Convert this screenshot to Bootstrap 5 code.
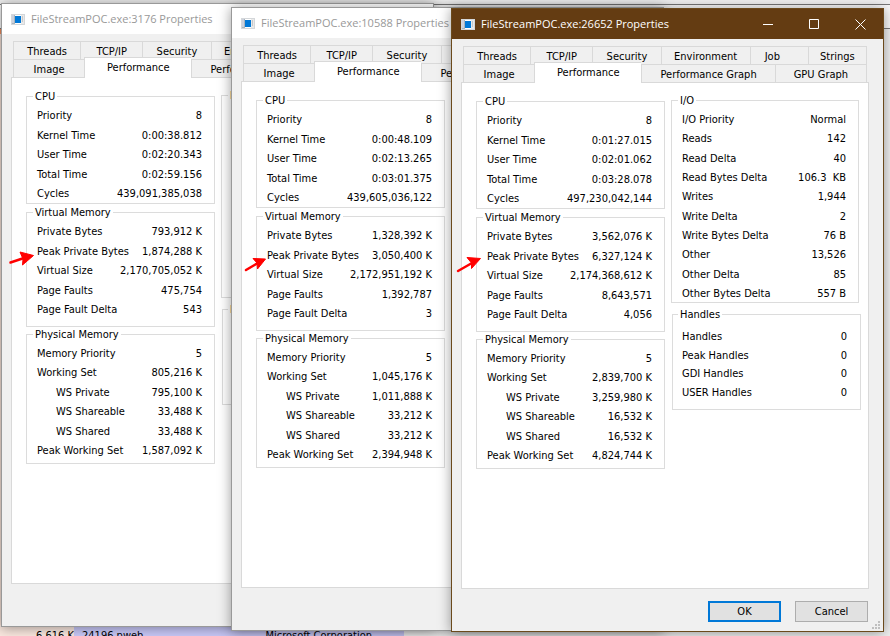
<!DOCTYPE html>
<html lang="en">
<head>
<meta charset="utf-8">
<meta name="viewport" content="width=device-width, initial-scale=1">
<title>FileStreamPOC.exe Properties</title>
<link href="https://cdn.jsdelivr.net/npm/bootstrap@5.3.0/dist/css/bootstrap.min.css" rel="stylesheet">
<style>
body { font-family: "DejaVu Sans Condensed", "Noto Sans", sans-serif; font-size: 11px; line-height: 14px; color: #000; background: #f0f0f0; }
.desk { height: 100vh; min-height: 636px; }
.menu-strip { height: 5px; border-bottom: 1px solid #777; }
.tool-strip { height: 24px; background: #fafafa; border-bottom: 1px solid #777; }
.accent-strip { height: 5px; }
.accent-strip i { width: 2px; background: #f08c5c; height: 22px; display: block; }
.rows-strip { background: linear-gradient(90deg, #f5e0d6 0 450px, #f0f0f0 450px); }
.list-strip { height: 11px; }
.list-strip .cell-a { width: 74px; background: #fae8df; }
.list-strip .cell-b { width: 330px; background: #c8c8f8; }
.list-strip span { padding-top: 4px; white-space: nowrap; }

/* Property windows on the desktop */
.win { position: absolute; width: 433px; height: 624px; background: #f0f0f0; border: 1px solid #999; box-shadow: 0 1px 12px rgba(0,0,0,.4); }
.win-a { left: 1px; top: 3px; }
.win-b { left: 231px; top: 7px; }
.win-c { left: 451px; top: 8px; border-color: #6b4a1c; }
.titlebar { height: 30px; background: #fff; color: #999; font-family: "Open Sans", "Noto Sans", sans-serif; padding-left: 9px; white-space: nowrap; }
.win-c .titlebar { background: #643c12; color: #fff; }
.titlebar h1 { font-size: 11px; line-height: 16px; margin: 0 0 0 6px; font-weight: 400; }
.cap-btn { width: 46px; height: 30px; border: 0; background: none; color: inherit; padding: 0; display: flex; align-items: center; justify-content: center; }

.tabset { padding: 7px 14px 0 9px; }
.tab-line { padding: 0 2px; height: 18px; }
.tab-btn { border: 1px solid #d9d9d9; border-width: 1px 0 0 1px; background: #f0f0f0; padding: 2px 0 0; color: #000; line-height: 14px; white-space: nowrap; min-width: 0; }
.tab-btn:last-child { border-right-width: 1px; }
.tab-btn.active { background: #fff; margin: -2px 0 -1px; z-index: 1; padding-bottom: 2px; }
.w58 { flex: 58 1 58px; padding-right: 14px; }
.w59 { flex: 59 1 59px; }
.w62 { flex: 62 1 62px; }
.w67 { flex: 67 1 67px; }
.w68 { flex: 68 1 68px; }
.w71 { flex: 71 1 71px; }
.w89 { flex: 89 1 89px; }
.w92 { flex: 92 1 92px; }
.w107 { flex: 107 1 107px; }
.w133 { flex: 133 1 133px; }

.sheet { background: #fff; border: 1px solid #d9d9d9; margin: 0 14px 0 9px; padding: 10px 8px 0 14px; gap: 6px; }
.half { flex: 1 1 0; min-width: 0; }
.half + .half { margin-top: -1px; }
.grp { border: 1px solid #dcdcdc; padding: 5px 12px 2px 10px; }
.grp legend { float: none; width: auto; font-size: 11px; line-height: 14px; margin: 0 0 0 -4px; padding: 2px 2px 0; }
.grp dl { margin: 0; display: flex; flex-direction: column; justify-content: space-between; min-height: 92px; }
.grp dl > div { display: flex; justify-content: space-between; white-space: nowrap; }
.grp dt { font-weight: 400; }
.grp dd { margin: 0; }
.grp .sub { padding-left: 19px; }
.grp-virtual { padding-bottom: 9px; }
.grp-physical { margin-top: -1px; padding-bottom: 5px; }
.grp-physical dl { min-height: 111px; }
.grp-io { padding-bottom: 1px; margin-right: 1px; }
.grp-io dl { min-height: 188px; }
.grp-handles { margin: 3px -1px 0 1px; padding: 8px 13px 9px 9px; }
.grp-handles dl { min-height: 70px; }

.actions { padding: 12px 15px 9px; gap: 14px; min-height: 42px; }
.dlg-btn { width: 73px; height: 21px; font-size: 11px; line-height: 14px; padding: 0; border-radius: 0; background: #e1e1e1; border: 1px solid #adadad; color: #000; }
.dlg-btn.default { border: 2px solid #0078d7; }
.grip { position: absolute; right: 3px; bottom: 2px; }
.arrow { position: absolute; z-index: 2; }
.arrow-a { left: 7px; top: 248px; }
.arrow-b { left: 242px; top: 255px; }
.arrow-c { left: 454px; top: 254px; }
</style>
<script src="https://cdn.jsdelivr.net/npm/bootstrap@5.3.0/dist/js/bootstrap.bundle.min.js"></script>
</head>
<body>
<svg class="d-none">
  <symbol id="app" viewBox="0 0 14 11">
    <rect width="14" height="11" fill="#d4d7da"/>
    <rect x="1" y="1" width="3" height="9" fill="#a9b4bc"/>
    <path d="M1 2h2M1 4h2M1 6h2M1 8h2" stroke="#eef" stroke-width="1"/>
    <rect x="4" y="1" width="6" height="9" fill="#fff"/>
    <rect x="4" y="2" width="6" height="7" fill="#0078d7"/>
    <rect x="10" y="1" width="3" height="9" fill="#e9e9e9"/>
    <path d="M11 3h1M11 5h1M11 7h1" stroke="#a0a6aa"/>
  </symbol>
</svg>
<main class="desk position-relative overflow-hidden d-flex flex-column">
  <div class="menu-strip"></div>
  <div class="tool-strip"></div>
  <div class="accent-strip"><i></i></div>
  <div class="rows-strip flex-grow-1"></div>
  <div class="list-strip d-flex overflow-hidden">
    <div class="cell-a d-flex justify-content-end"><span>6,616 K</span></div>
    <div class="cell-b d-flex ps-2"><span>24196 pweb</span><span class="ms-auto me-4 pe-2">Microsoft Corporation</span></div>
  </div>

  <section class="win win-a d-flex flex-column" aria-label="Process 3176">
    <header class="titlebar d-flex align-items-center"><svg width="14" height="11"><use href="#app"/></svg><h1>FileStreamPOC.exe:3176 Properties</h1></header>
    <div class="tabset">
      <div class="tab-line d-flex"><button class="tab-btn w67">Threads</button><button class="tab-btn w62">TCP/IP</button><button class="tab-btn w68">Security</button><button class="tab-btn w89">Environment</button><button class="tab-btn w58"></button><button class="tab-btn w59"></button></div>
      <div class="tab-line d-flex"><button class="tab-btn w71">Image</button><button class="tab-btn w107 active">Performance</button><button class="tab-btn w133">Performance Graph</button><button class="tab-btn w92"></button></div>
    </div>
    <div class="sheet d-flex flex-grow-1">
      <div class="half">
        <fieldset class="grp"><legend>CPU</legend><dl>
          <div><dt>Priority</dt><dd>8</dd></div>
          <div><dt>Kernel Time</dt><dd>0:00:38.812</dd></div>
          <div><dt>User Time</dt><dd>0:02:20.343</dd></div>
          <div><dt>Total Time</dt><dd>0:02:59.156</dd></div>
          <div><dt>Cycles</dt><dd>439,091,385,038</dd></div>
        </dl></fieldset>
        <fieldset class="grp grp-virtual"><legend>Virtual Memory</legend><dl>
          <div><dt>Private Bytes</dt><dd>793,912 K</dd></div>
          <div><dt>Peak Private Bytes</dt><dd>1,874,288 K</dd></div>
          <div><dt>Virtual Size</dt><dd>2,170,705,052 K</dd></div>
          <div><dt>Page Faults</dt><dd>475,754</dd></div>
          <div><dt>Page Fault Delta</dt><dd>543</dd></div>
        </dl></fieldset>
        <fieldset class="grp grp-physical"><legend>Physical Memory</legend><dl>
          <div><dt>Memory Priority</dt><dd>5</dd></div>
          <div><dt>Working Set</dt><dd>805,216 K</dd></div>
          <div><dt class="sub">WS Private</dt><dd>795,100 K</dd></div>
          <div><dt class="sub">WS Shareable</dt><dd>33,488 K</dd></div>
          <div><dt class="sub">WS Shared</dt><dd>33,488 K</dd></div>
          <div><dt>Peak Working Set</dt><dd>1,587,092 K</dd></div>
        </dl></fieldset>
      </div>
      <div class="half">
        <fieldset class="grp grp-io"><legend>I/O</legend><dl></dl></fieldset>
        <fieldset class="grp grp-handles"><legend>Handles</legend><dl></dl></fieldset>
      </div>
    </div>
    <footer class="actions"></footer>
  </section>

  <section class="win win-b d-flex flex-column" aria-label="Process 10588">
    <header class="titlebar d-flex align-items-center"><svg width="14" height="11"><use href="#app"/></svg><h1>FileStreamPOC.exe:10588 Properties</h1></header>
    <div class="tabset">
      <div class="tab-line d-flex"><button class="tab-btn w67">Threads</button><button class="tab-btn w62">TCP/IP</button><button class="tab-btn w68">Security</button><button class="tab-btn w89"></button><button class="tab-btn w58"></button><button class="tab-btn w59"></button></div>
      <div class="tab-line d-flex"><button class="tab-btn w71">Image</button><button class="tab-btn w107 active">Performance</button><button class="tab-btn w133">Performance Graph</button><button class="tab-btn w92"></button></div>
    </div>
    <div class="sheet d-flex flex-grow-1">
      <div class="half">
        <fieldset class="grp"><legend>CPU</legend><dl>
          <div><dt>Priority</dt><dd>8</dd></div>
          <div><dt>Kernel Time</dt><dd>0:00:48.109</dd></div>
          <div><dt>User Time</dt><dd>0:02:13.265</dd></div>
          <div><dt>Total Time</dt><dd>0:03:01.375</dd></div>
          <div><dt>Cycles</dt><dd>439,605,036,122</dd></div>
        </dl></fieldset>
        <fieldset class="grp grp-virtual"><legend>Virtual Memory</legend><dl>
          <div><dt>Private Bytes</dt><dd>1,328,392 K</dd></div>
          <div><dt>Peak Private Bytes</dt><dd>3,050,400 K</dd></div>
          <div><dt>Virtual Size</dt><dd>2,172,951,192 K</dd></div>
          <div><dt>Page Faults</dt><dd>1,392,787</dd></div>
          <div><dt>Page Fault Delta</dt><dd>3</dd></div>
        </dl></fieldset>
        <fieldset class="grp grp-physical"><legend>Physical Memory</legend><dl>
          <div><dt>Memory Priority</dt><dd>5</dd></div>
          <div><dt>Working Set</dt><dd>1,045,176 K</dd></div>
          <div><dt class="sub">WS Private</dt><dd>1,011,888 K</dd></div>
          <div><dt class="sub">WS Shareable</dt><dd>33,212 K</dd></div>
          <div><dt class="sub">WS Shared</dt><dd>33,212 K</dd></div>
          <div><dt>Peak Working Set</dt><dd>2,394,948 K</dd></div>
        </dl></fieldset>
      </div>
      <div class="half"></div>
    </div>
    <footer class="actions"></footer>
  </section>

  <section class="win win-c d-flex flex-column" aria-label="Process 26652">
    <header class="titlebar d-flex align-items-center"><svg width="14" height="11"><use href="#app"/></svg><h1 class="me-auto">FileStreamPOC.exe:26652 Properties</h1>
      <button class="cap-btn" aria-label="Minimize"><svg width="10" height="10" stroke="currentColor" fill="none"><path d="M0 5.5h10"/></svg></button>
      <button class="cap-btn" aria-label="Maximize"><svg width="10" height="10" stroke="currentColor" fill="none"><path d="M.5.5h9v9h-9z"/></svg></button>
      <button class="cap-btn" aria-label="Close"><svg width="11" height="11" stroke="currentColor" fill="none"><path d="M.5.5l10 10M10.5.5l-10 10"/></svg></button>
    </header>
    <div class="tabset">
      <div class="tab-line d-flex"><button class="tab-btn w67">Threads</button><button class="tab-btn w62">TCP/IP</button><button class="tab-btn w68">Security</button><button class="tab-btn w89">Environment</button><button class="tab-btn w58">Job</button><button class="tab-btn w59">Strings</button></div>
      <div class="tab-line d-flex"><button class="tab-btn w71">Image</button><button class="tab-btn w107 active">Performance</button><button class="tab-btn w133">Performance Graph</button><button class="tab-btn w92">GPU Graph</button></div>
    </div>
    <div class="sheet d-flex flex-grow-1">
      <div class="half">
        <fieldset class="grp"><legend>CPU</legend><dl>
          <div><dt>Priority</dt><dd>8</dd></div>
          <div><dt>Kernel Time</dt><dd>0:01:27.015</dd></div>
          <div><dt>User Time</dt><dd>0:02:01.062</dd></div>
          <div><dt>Total Time</dt><dd>0:03:28.078</dd></div>
          <div><dt>Cycles</dt><dd>497,230,042,144</dd></div>
        </dl></fieldset>
        <fieldset class="grp grp-virtual"><legend>Virtual Memory</legend><dl>
          <div><dt>Private Bytes</dt><dd>3,562,076 K</dd></div>
          <div><dt>Peak Private Bytes</dt><dd>6,327,124 K</dd></div>
          <div><dt>Virtual Size</dt><dd>2,174,368,612 K</dd></div>
          <div><dt>Page Faults</dt><dd>8,643,571</dd></div>
          <div><dt>Page Fault Delta</dt><dd>4,056</dd></div>
        </dl></fieldset>
        <fieldset class="grp grp-physical"><legend>Physical Memory</legend><dl>
          <div><dt>Memory Priority</dt><dd>5</dd></div>
          <div><dt>Working Set</dt><dd>2,839,700 K</dd></div>
          <div><dt class="sub">WS Private</dt><dd>3,259,980 K</dd></div>
          <div><dt class="sub">WS Shareable</dt><dd>16,532 K</dd></div>
          <div><dt class="sub">WS Shared</dt><dd>16,532 K</dd></div>
          <div><dt>Peak Working Set</dt><dd>4,824,744 K</dd></div>
        </dl></fieldset>
      </div>
      <div class="half">
        <fieldset class="grp grp-io"><legend>I/O</legend><dl>
          <div><dt>I/O Priority</dt><dd>Normal</dd></div>
          <div><dt>Reads</dt><dd>142</dd></div>
          <div><dt>Read Delta</dt><dd>40</dd></div>
          <div><dt>Read Bytes Delta</dt><dd>106.3&nbsp; KB</dd></div>
          <div><dt>Writes</dt><dd>1,944</dd></div>
          <div><dt>Write Delta</dt><dd>2</dd></div>
          <div><dt>Write Bytes Delta</dt><dd>76 B</dd></div>
          <div><dt>Other</dt><dd>13,526</dd></div>
          <div><dt>Other Delta</dt><dd>85</dd></div>
          <div><dt>Other Bytes Delta</dt><dd>557 B</dd></div>
        </dl></fieldset>
        <fieldset class="grp grp-handles"><legend>Handles</legend><dl>
          <div><dt>Handles</dt><dd>0</dd></div>
          <div><dt>Peak Handles</dt><dd>0</dd></div>
          <div><dt>GDI Handles</dt><dd>0</dd></div>
          <div><dt>USER Handles</dt><dd>0</dd></div>
        </dl></fieldset>
      </div>
    </div>
    <footer class="actions d-flex justify-content-end">
      <button class="btn dlg-btn default">OK</button>
      <button class="btn dlg-btn">Cancel</button>
    </footer>
    <svg class="grip" width="8" height="8" fill="#bfbfbf"><path d="M6 0h2v2H6zM3 3h2v2H3zM6 3h2v2H6zM0 6h2v2H0zM3 6h2v2H3zM6 6h2v2H6z"/></svg>
  </section>

  <svg class="arrow arrow-a" width="30" height="20" fill="#f00" stroke="#f00"><path d="M3.5 14.5L17 10" stroke-width="2.5" stroke-linecap="round"/><path d="M13 4L26.5 7.5 15.500 17 16 11z" stroke-linejoin="round"/></svg>
  <svg class="arrow arrow-b" width="30" height="20" fill="#f00" stroke="#f00"><path d="M4 15L15 8.500" stroke-width="2.5" stroke-linecap="round"/><path d="M11 3.500L23.500 4 15.500 14 15 8z" stroke-linejoin="round"/></svg>
  <svg class="arrow arrow-c" width="30" height="20" fill="#f00" stroke="#f00"><path d="M4 17L18 9" stroke-width="2.5" stroke-linecap="round"/><path d="M13 3.500L26.500 4.500 17.500 14.500 17.500 9z" stroke-linejoin="round"/></svg>
</main>
</body>
</html>
